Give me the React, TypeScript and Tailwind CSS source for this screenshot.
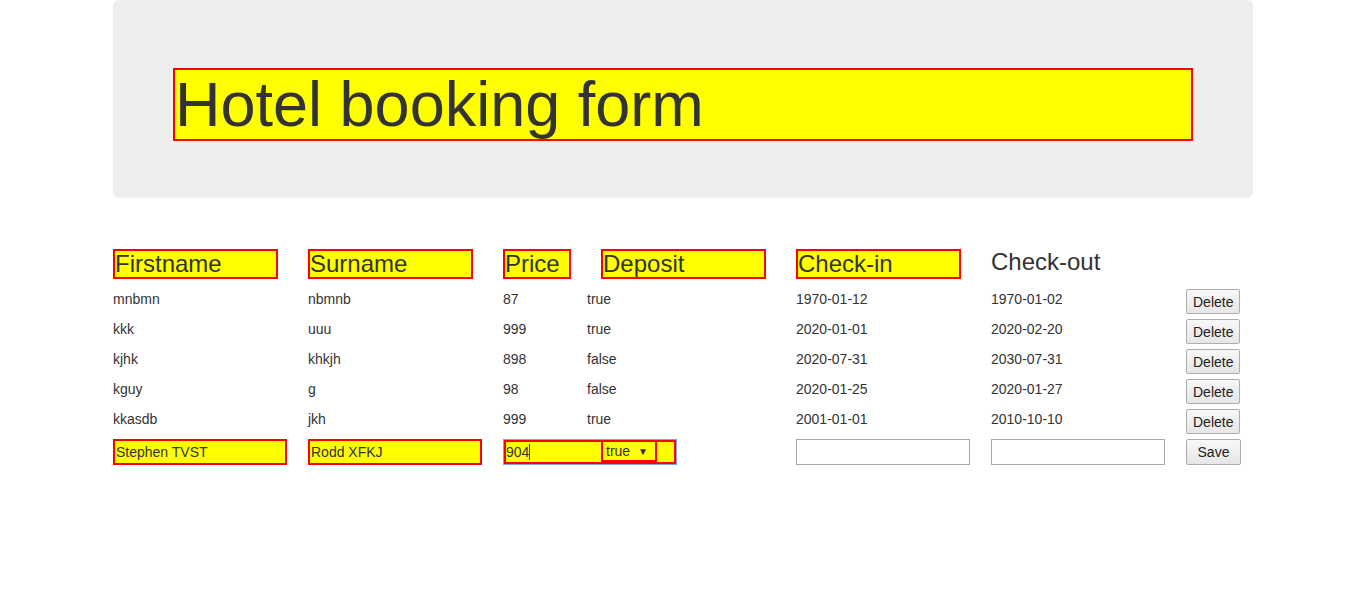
import React from 'react';

interface Booking {
  firstname: string;
  surname: string;
  price: number;
  deposit: boolean;
  checkin: string;
  checkout: string;
}

const bookings: Booking[] = [
  { firstname: 'mnbmn', surname: 'nbmnb', price: 87, deposit: true, checkin: '1970-01-12', checkout: '1970-01-02' },
  { firstname: 'kkk', surname: 'uuu', price: 999, deposit: true, checkin: '2020-01-01', checkout: '2020-02-20' },
  { firstname: 'kjhk', surname: 'khkjh', price: 898, deposit: false, checkin: '2020-07-31', checkout: '2030-07-31' },
  { firstname: 'kguy', surname: 'g', price: 98, deposit: false, checkin: '2020-01-25', checkout: '2020-01-27' },
  { firstname: 'kkasdb', surname: 'jkh', price: 999, deposit: true, checkin: '2001-01-01', checkout: '2010-10-10' },
];

const font = { fontFamily: '"Liberation Sans", Arial, Helvetica, sans-serif' };

// highlighted box used on the labelled elements
const marked = 'bg-[#ffff00] border-2 border-[#ff0000]';

const btnClass =
  'h-[25px] px-[6px] border border-[#adadad] rounded-[2px] bg-gradient-to-b from-[#f8f8f8] to-[#e6e6e6] text-[14px] text-[#222] leading-none';

function Header({ label, width, boxed = true }: { label: string; width: string; boxed?: boolean }) {
  return (
    <div className={`${width} shrink-0`}>
      <h3
        className={`text-[24px] leading-[26px] font-normal ${boxed ? marked : ''} ${
          label === 'Price' ? 'w-[68px]' : 'w-[165px]'
        }`}
      >
        {label}
      </h3>
    </div>
  );
}

function BookingRow({ booking }: { booking: Booking }) {
  return (
    <div className="flex h-[30px] text-[14px] leading-[20px]">
      <div className="w-[195px] shrink-0">{booking.firstname}</div>
      <div className="w-[195px] shrink-0">{booking.surname}</div>
      <div className="w-[84px] shrink-0">{booking.price}</div>
      <div className="w-[209px] shrink-0">{String(booking.deposit)}</div>
      <div className="w-[195px] shrink-0">{booking.checkin}</div>
      <div className="w-[195px] shrink-0">{booking.checkout}</div>
      <div>
        <button className={btnClass}>Delete</button>
      </div>
    </div>
  );
}

export default function App() {
  return (
    <div className="min-h-[613px] bg-white text-[#333]" style={font}>
      <div className="w-[1140px] mx-auto">
        <div className="bg-[#eeeeee] rounded-[6px] h-[198px] px-[60px] pt-[68px]">
          <h1 className={`${marked} h-[73px] text-[63px] leading-[68px] font-normal`}>Hotel booking form</h1>
        </div>

        <div className="flex mt-[51px] mb-[10px] items-start">
          <Header label="Firstname" width="w-[195px]" />
          <Header label="Surname" width="w-[195px]" />
          <Header label="Price" width="w-[98px]" />
          <Header label="Deposit" width="w-[195px]" />
          <Header label="Check-in" width="w-[195px]" />
          <Header label="Check-out" width="w-[195px]" boxed={false} />
        </div>

        {bookings.map((b, i) => (
          <BookingRow key={i} booking={b} />
        ))}

        <div className="flex h-[26px] text-[14px]">
          <div className="w-[195px] shrink-0">
            <div className={`${marked} w-[174px] h-[26px] flex items-center pl-[1px]`}>Stephen TVST</div>
          </div>
          <div className="w-[195px] shrink-0">
            <div className={`${marked} w-[174px] h-[26px] flex items-center pl-[1px]`}>Rodd XFKJ</div>
          </div>
          <div className="w-[293px] shrink-0">
            <div className="relative w-[174px] h-[26px] border border-[#7ba3e8]">
              <div className="bg-[#ffff00] border-2 border-[#ff0000] h-full flex items-center">
                <span>904</span>
                <span className="inline-block w-px h-[16px] bg-[#333]" />
              </div>
              <div
                className={`absolute left-[97px] top-0 w-[56px] h-[22px] ${marked} flex items-center justify-between pl-[3px] pr-[7px] text-[14px]`}
              >
                <span>true</span>
                <span className="text-[10px]">▼</span>
              </div>
            </div>
          </div>
          <div className="w-[195px] shrink-0">
            <div className="w-[174px] h-[26px] border border-[#a9a9a9] bg-white" />
          </div>
          <div className="w-[195px] shrink-0">
            <div className="w-[174px] h-[26px] border border-[#a9a9a9] bg-white" />
          </div>
          <div>
            <button className={`${btnClass} h-[26px] w-[55px]`}>Save</button>
          </div>
        </div>
      </div>
    </div>
  );
}
